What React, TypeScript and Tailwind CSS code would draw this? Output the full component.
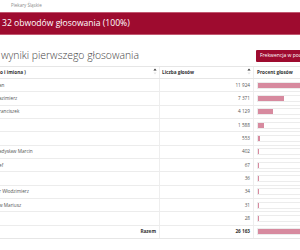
const rows: { name: string; votes: number }[] = [
  { name: "an", votes: 11924 },
  { name: "azimierz", votes: 7371 },
  { name: "ranciszek", votes: 4129 },
  { name: "", votes: 1588 },
  { name: "", votes: 553 },
  { name: "adysław Marcin", votes: 402 },
  { name: "ef", votes: 67 },
  { name: "", votes: 36 },
  { name: "r Włodzimierz", votes: 34 },
  { name: "w Mariusz", votes: 31 },
  { name: "", votes: 28 },
];

const total = rows.reduce((s, r) => s + r.votes, 0);

// thousands separated by a space, also for 4-digit numbers
const fmt = (n: number) => String(n).replace(/\B(?=(\d{3})+(?!\d))/g, " ");

function SortIcon() {
  return (
    <svg width="4" height="7" viewBox="0 0 4 7" className="shrink-0">
      <path d="M2 0.5 L3.6 2.6 L0.4 2.6 Z" fill="#333" />
      <path d="M2 6.5 L3.6 4.4 L0.4 4.4 Z" fill="#e4e4e4" />
    </svg>
  );
}

function Bar({ votes }: { votes: number }) {
  return (
    <div className="h-[7px] w-[96px] border border-[#ececec] bg-white">
      <div
        className="h-full bg-[#d78a9f]"
        style={{ width: `${(votes / total) * 100}%` }}
      />
    </div>
  );
}

function App() {
  return (
    <div className="h-[250px] w-[300px] overflow-hidden bg-white font-['Open_Sans',sans-serif]">
      <div className="h-[12px] pl-[11px] text-[4.5px] leading-[10px] text-[#8a8a8a]">
        Piekary Śląskie
      </div>
      <div className="flex h-[23px] items-center border-y border-[#c25870] bg-[#9e0b2f] pl-[2px] text-[8.6px] text-white">
        32 obwodów głosowania (100%)
      </div>

      {/* title + button */}
      <div className="flex h-[31px] items-center justify-between pt-[10px]">
        <h2 className="whitespace-nowrap pl-[1px] text-[10.4px] font-light text-[#444]">
          wyniki pierwszego głosowania
        </h2>
        <button className="-mr-[30px] flex h-[12px] w-[74px] shrink-0 items-center overflow-hidden whitespace-nowrap rounded-[1px] bg-[#9e0b2f] pl-[4px] text-[5px] text-white">
          Frekwencja w podziale na obwody
        </button>
      </div>

      {/* table */}
      <div className="w-[420px] text-[4.7px]">
        <div className="flex h-[13px] border-y border-[#e6e6e6] font-bold text-[#333]">
          <div className="flex w-[160px] items-center justify-between border-r border-[#eeeeee] pr-[2px]">
            <span className="whitespace-nowrap pt-[1px]">o i imiona )</span>
            <div className="-mt-[2px]">
              <SortIcon />
            </div>
          </div>
          <div className="flex w-[94px] items-center justify-between border-r border-[#eeeeee] pl-[2px] pr-[2px]">
            <span className="pt-[1px]">Liczba głosów</span>
            <div className="-mt-[2px]">
              <SortIcon />
            </div>
          </div>
          <div className="flex w-[110px] items-center pl-[3px]">
            <span className="pt-[1px]">Procent głosów</span>
          </div>
        </div>

        {rows.map((r, i) => (
          <div
            key={i}
            className="flex h-[13.33px] border-b border-[#ececec] text-[#555]"
          >
            <div className="flex w-[160px] items-center border-r border-[#eeeeee]">
              <span className="-ml-[1px] whitespace-nowrap">{r.name}</span>
            </div>
            <div className="flex w-[94px] items-center justify-end border-r border-[#eeeeee] pr-[3px]">
              {fmt(r.votes)}
            </div>
            <div className="flex w-[110px] items-center pl-[3px]">
              <Bar votes={r.votes} />
            </div>
          </div>
        ))}

        <div className="flex h-[13.33px] border-b border-[#e6e6e6] font-bold text-[#333]">
          <div className="flex w-[160px] items-center justify-end border-r border-[#eeeeee] pr-[3px]">
            Razem
          </div>
          <div className="flex w-[94px] items-center justify-end border-r border-[#eeeeee] pr-[3px]">
            {fmt(total)}
          </div>
          <div className="flex w-[110px] items-center pl-[3px]">
            <Bar votes={total} />
          </div>
        </div>
      </div>

      <h2 className="mt-[10px] whitespace-nowrap pl-[4px] text-[10.4px] font-light text-[#444]">
        Szczegółowe wyniki głosowania w obwodach
      </h2>
    </div>
  );
}

export default App;
